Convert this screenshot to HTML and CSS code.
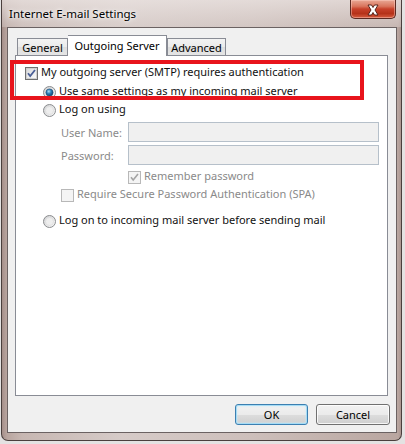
FILE: index.html
```html
<!DOCTYPE html>
<html>
<head>
<meta charset="utf-8">
<link rel="stylesheet" href="styles.css">
</head>
<body>
<div class="window">
  <div class="titlebar">
    <span class="title">Internet E-mail Settings</span>
    <div class="close">
      <svg width="16" height="12" viewBox="0 0 16 12">
        <path d="M3 1 L6.5 1 L8 3.5 L9.5 1 L13 1 L10 6 L13 11 L9.5 11 L8 8.5 L6.5 11 L3 11 L6 6 Z" fill="#fff" stroke="#4a1a12" stroke-width="0.9" stroke-linejoin="round"/>
      </svg>
    </div>
  </div>
  <div class="client">
    <div class="tabs">
      <div class="tab tab-general">General</div>
      <div class="tab tab-active">Outgoing Server</div>
      <div class="tab tab-advanced">Advanced</div>
    </div>
    <div class="panel">
      <div class="row row-auth">
        <svg class="box" width="13" height="13" viewBox="0 0 13 13">
          <rect x="0.5" y="0.5" width="12" height="12" fill="#f4f4f4" stroke="#6f7071"/>
          <rect x="1.5" y="1.5" width="10" height="10" fill="url(#cbg)" stroke="#d0d0d0"/>
          <defs><linearGradient id="cbg" x1="0" y1="0" x2="1" y2="1"><stop offset="0" stop-color="#d9dadc"/><stop offset="1" stop-color="#fbfbfb"/></linearGradient></defs>
          <path d="M3 6.2 L5.2 9 L10 3" fill="none" stroke="#4a5f97" stroke-width="1.8"/>
        </svg>
        <span class="label">My outgoing server (SMTP) requires authentication</span>
      </div>
      <div class="row row-radio row-short">
        <svg class="box" width="13" height="13" viewBox="0 0 13 13">
          <defs>
            <radialGradient id="rdot" cx="0.4" cy="0.35" r="0.7"><stop offset="0" stop-color="#a9def6"/><stop offset="0.45" stop-color="#2c7fb8"/><stop offset="1" stop-color="#0e3d66"/></radialGradient>
            <linearGradient id="rbg" x1="0" y1="0" x2="1" y2="1"><stop offset="0" stop-color="#cfd0d2"/><stop offset="1" stop-color="#fafafa"/></linearGradient>
          </defs>
          <circle cx="6.5" cy="6.5" r="6" fill="url(#rbg)" stroke="#8a8c8e"/>
          <circle cx="6.5" cy="6.5" r="3.6" fill="url(#rdot)" stroke="#1c4a73" stroke-width="0.6"/>
        </svg>
        <span class="label">Use same settings as my incoming mail server</span>
      </div>
      <div class="row row-radio row-short">
        <svg class="box" width="13" height="13" viewBox="0 0 13 13">
          <defs><linearGradient id="rbg2" x1="0" y1="0" x2="1" y2="1"><stop offset="0" stop-color="#cfd0d2"/><stop offset="1" stop-color="#fafafa"/></linearGradient></defs>
          <circle cx="6.5" cy="6.5" r="6" fill="url(#rbg2)" stroke="#8a8c8e"/>
          <circle cx="6.5" cy="6.5" r="4" fill="#eeeeee" stroke="#d8d8d8" stroke-width="0.6"/>
        </svg>
        <span class="label">Log on using</span>
      </div>
      <div class="field">
        <span class="field-label disabled">User Name:</span>
        <div class="input"></div>
      </div>
      <div class="field field-second">
        <span class="field-label disabled">Password:</span>
        <div class="input"></div>
      </div>
      <div class="row row-remember">
        <svg class="box" width="13" height="13" viewBox="0 0 13 13">
          <rect x="0.5" y="0.5" width="12" height="12" fill="#f4f4f4" stroke="#b8b8b8"/>
          <path d="M3 6.2 L5.2 9 L10 3" fill="none" stroke="#a4a4a4" stroke-width="1.6"/>
        </svg>
        <span class="label disabled">Remember password</span>
      </div>
      <div class="row row-spa">
        <svg class="box" width="13" height="13" viewBox="0 0 13 13">
          <rect x="0.5" y="0.5" width="12" height="12" fill="#f4f4f4" stroke="#b8b8b8"/>
        </svg>
        <span class="label disabled">Require Secure Password Authentication (SPA)</span>
      </div>
      <div class="row row-radio row-incoming">
        <svg class="box" width="13" height="13" viewBox="0 0 13 13">
          <defs><linearGradient id="rbg3" x1="0" y1="0" x2="1" y2="1"><stop offset="0" stop-color="#cfd0d2"/><stop offset="1" stop-color="#fafafa"/></linearGradient></defs>
          <circle cx="6.5" cy="6.5" r="6" fill="url(#rbg3)" stroke="#8a8c8e"/>
          <circle cx="6.5" cy="6.5" r="4" fill="#eeeeee" stroke="#d8d8d8" stroke-width="0.6"/>
        </svg>
        <span class="label">Log on to incoming mail server before sending mail</span>
      </div>
    </div>
    <div class="buttons">
      <div class="btn btn-default">OK</div>
      <div class="btn">Cancel</div>
    </div>
  </div>
  <div class="highlight"></div>
</div>
</body>
</html>
```

FILE: styles.css
```css
* { box-sizing: border-box; }
html, body { margin: 0; padding: 0; }
body {
  width: 405px;
  height: 444px;
  overflow: hidden;
  background: #e4e2e2;
  font-family: "Noto Sans", "Open Sans", sans-serif;
  font-size: 11px;
  color: #111;
}
.window {
  position: relative;
  margin-left: 1px;
  width: 401px;
  height: 441px;
  border: 1px solid #4a3f3d;
  border-top: none;
  border-radius: 0 0 7px 7px;
  background: linear-gradient(90deg, #a58f8a 0px, #b9a6a0 5px, #c7b7b2 20px, #d6cbc8 120px, #cdbfbb 250px, #b9a6a0 396px, #a58f8a 400px);
  padding: 0 4px 0 5px;
  display: flex;
  flex-direction: column;
}
.titlebar {
  height: 27px;
  display: flex;
  justify-content: space-between;
  align-items: flex-start;
  background: linear-gradient(180deg, rgba(235,228,226,0.75) 0%, rgba(220,210,207,0.4) 100%);
  margin: 0 -4px 0 -5px;
  padding: 0 5px 0 7px;
}
.title {
  margin-top: 6px;
  line-height: 16px;
  font-size: 11.5px;
  color: #000;
  text-shadow: 0 0 6px #fff, 0 0 3px #fff;
}
.close {
  width: 46px;
  height: 19px;
  border: 1px solid #5b2a22;
  border-top: none;
  border-radius: 0 0 5px 5px;
  background: linear-gradient(180deg, #e9a895 0%, #d9755d 35%, #c7412a 50%, #b53219 75%, #d65d3f 100%);
  box-shadow: inset 0 0 0 1px rgba(255,210,200,0.45);
  display: flex;
  align-items: center;
  justify-content: center;
}
.close svg { display: block; margin-top: 1px; }
.client {
  width: 390px;
  height: 406px;
  border: 1px solid #6b6262;
  background: #f0f0f0;
  padding: 7px 7px 0 7px;
  display: flex;
  flex-direction: column;
}
.tabs {
  height: 20px;
  display: flex;
  align-items: flex-end;
  padding-left: 2px;
}
.tab {
  height: 17px;
  border: 1px solid #898c95;
  border-bottom: none;
  background: linear-gradient(180deg, #f3f3f3 0%, #ebebeb 50%, #dedede 51%, #e5e5e5 100%);
  line-height: 18px;
  text-align: center;
  color: #000;
}
.tab-general { width: 51px; }
.tab-active {
  position: relative;
  z-index: 1;
  width: 99px;
  height: 21px;
  margin-bottom: -1px;
  background: #fff;
  line-height: 19px;
  border-left: none;
}
.tab-advanced { width: 59px; border-left: 1px solid #898c95; }
.panel {
  width: 373px;
  height: 341px;
  border: 1px solid #898c95;
  background: #fff;
  padding: 8px 0 0 9px;
  display: flex;
  flex-direction: column;
}
.row {
  height: 19px;
  display: flex;
  align-items: center;
  gap: 3px;
}
.row-short { height: 18px; }
.box { display: block; flex: none; }
.label { white-space: nowrap; line-height: 15px; margin-bottom: 4px; }
.row-radio { padding-left: 18px; }
.field {
  height: 20px;
  margin-top: 3px;
  display: flex;
  align-items: center;
  padding-left: 36px;
}
.field-second { margin-top: 3px; }
.field-label { width: 67px; white-space: nowrap; }
.input {
  width: 251px;
  height: 20px;
  border: 1px solid #b6c0ca;
  background: #f0f0f0;
}
.disabled { color: #8a8a8a; }
.row-remember { height: 17px; margin-top: 4px; padding-left: 103px; }
.row-spa { height: 17px; margin-top: 1px; padding-left: 36px; }
.row-incoming { margin-top: 8px; }
.buttons {
  margin-top: 8px;
  display: flex;
  justify-content: flex-end;
  gap: 8px;
  margin-right: -1px;
}
.btn {
  width: 74px;
  height: 21px;
  border: 1px solid #707070;
  border-radius: 3px;
  background: linear-gradient(180deg, #f2f2f2 0%, #ebebeb 50%, #dddddd 51%, #cfcfcf 100%);
  box-shadow: inset 0 0 0 1px rgba(255,255,255,0.8);
  text-align: center;
  line-height: 19px;
  color: #000;
}
.btn-default {
  width: 73px;
  border-color: #3c7fb1;
  box-shadow: inset 0 0 0 1px #a6dcf5, inset 0 0 2px 1px #c8ecfb;
}
.highlight {
  position: absolute;
  left: 8px;
  top: 60px;
  width: 354px;
  height: 40px;
  border: 4px solid #e8141c;
}
```
